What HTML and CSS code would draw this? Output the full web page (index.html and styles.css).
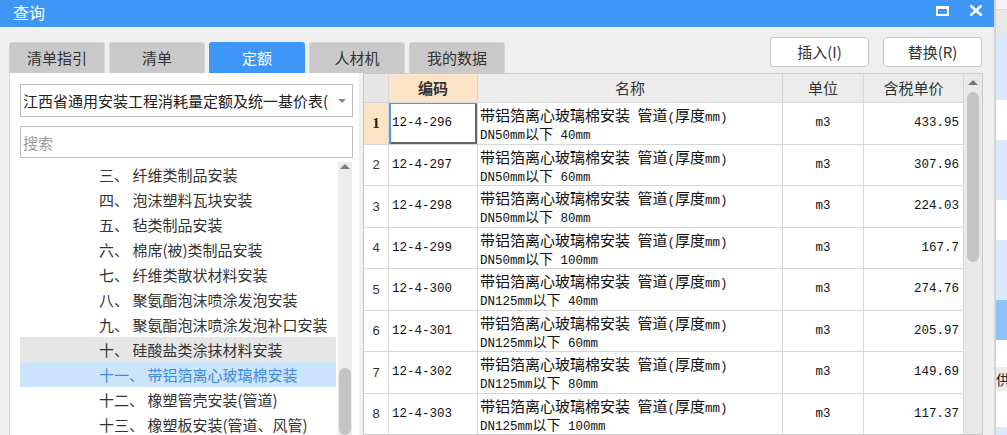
FILE: index.html
```html
<!DOCTYPE html>
<html lang="zh-CN">
<head>
<meta charset="utf-8">
<title>查询</title>
<link rel="stylesheet" href="styles.css">
</head>
<body>
<div class="dialog">
  <div class="titlebar">
    <span class="title">查询</span>
    <div class="winbtns">
      <svg class="ico" width="13" height="10" viewBox="0 0 13 10"><rect x="1" y="1.5" width="11" height="7.5" fill="none" stroke="#fff" stroke-width="2"/><rect x="0" y="0" width="13" height="3" fill="#fff"/></svg>
      <svg class="ico" width="12" height="11" viewBox="0 0 12 11"><path d="M1 1L11 10M11 1L1 10" stroke="#fff" stroke-width="2.6" stroke-linecap="square"/></svg>
    </div>
  </div>
  <div class="toolbar">
    <div class="tabs">
      <div class="tab">清单指引</div>
      <div class="tab">清单</div>
      <div class="tab active">定额</div>
      <div class="tab">人材机</div>
      <div class="tab">我的数据</div>
    </div>
    <div class="actions">
      <div class="btn">插入(I)</div>
      <div class="btn">替换(R)</div>
    </div>
  </div>
  <div class="main">
    <div class="left">
      <div class="select"><span class="select-text">江西省通用安装工程消耗量定额及统一基价表(</span><span class="caret"></span></div>
      <div class="search">搜索</div>
      <div class="tree">
        <div class="list">
          <div class="item"><span class="num">三、</span> 纤维类制品安装</div>
          <div class="item"><span class="num">四、</span> 泡沫塑料瓦块安装</div>
          <div class="item"><span class="num">五、</span> 毡类制品安装</div>
          <div class="item"><span class="num">六、</span> 棉席(被)类制品安装</div>
          <div class="item"><span class="num">七、</span> 纤维类散状材料安装</div>
          <div class="item"><span class="num">八、</span> 聚氨酯泡沫喷涂发泡安装</div>
          <div class="item"><span class="num">九、</span> 聚氨酯泡沫喷涂发泡补口安装</div>
          <div class="item hover"><span class="num">十、</span> 硅酸盐类涂抹材料安装</div>
          <div class="item selected"><span class="num">十一、</span> 带铝箔离心玻璃棉安装</div>
          <div class="item"><span class="num">十二、</span> 橡塑管壳安装(管道)</div>
          <div class="item"><span class="num">十三、</span> 橡塑板安装(管道、风管)</div>
        </div>
        <div class="vscroll tree-scroll">
          <span class="up"></span>
          <span class="thumb tree-thumb"></span>
        </div>
      </div>
    </div>
    <div class="table">
      <div class="grid">
        <div class="row head">
          <div class="c rn"></div>
          <div class="c code-h">编码</div>
          <div class="c">名称</div>
          <div class="c">单位</div>
          <div class="c">含税单价</div>
        </div>
        <div class="row">
          <div class="c rn first">1</div>
          <div class="c code focus">12-4-296</div>
          <div class="c name"><div><span class="cj">带铝箔离心玻璃棉安装</span> <span class="cj">管道</span>(<span class="cj">厚度</span>mm)</div><div>DN50mm<span class="cj">以下</span> 40mm</div></div>
          <div class="c unit">m3</div>
          <div class="c price">433.95</div>
        </div>
        <div class="row">
          <div class="c rn">2</div>
          <div class="c code">12-4-297</div>
          <div class="c name"><div><span class="cj">带铝箔离心玻璃棉安装</span> <span class="cj">管道</span>(<span class="cj">厚度</span>mm)</div><div>DN50mm<span class="cj">以下</span> 60mm</div></div>
          <div class="c unit">m3</div>
          <div class="c price">307.96</div>
        </div>
        <div class="row">
          <div class="c rn">3</div>
          <div class="c code">12-4-298</div>
          <div class="c name"><div><span class="cj">带铝箔离心玻璃棉安装</span> <span class="cj">管道</span>(<span class="cj">厚度</span>mm)</div><div>DN50mm<span class="cj">以下</span> 80mm</div></div>
          <div class="c unit">m3</div>
          <div class="c price">224.03</div>
        </div>
        <div class="row">
          <div class="c rn">4</div>
          <div class="c code">12-4-299</div>
          <div class="c name"><div><span class="cj">带铝箔离心玻璃棉安装</span> <span class="cj">管道</span>(<span class="cj">厚度</span>mm)</div><div>DN50mm<span class="cj">以下</span> 100mm</div></div>
          <div class="c unit">m3</div>
          <div class="c price">167.7</div>
        </div>
        <div class="row">
          <div class="c rn">5</div>
          <div class="c code">12-4-300</div>
          <div class="c name"><div><span class="cj">带铝箔离心玻璃棉安装</span> <span class="cj">管道</span>(<span class="cj">厚度</span>mm)</div><div>DN125mm<span class="cj">以下</span> 40mm</div></div>
          <div class="c unit">m3</div>
          <div class="c price">274.76</div>
        </div>
        <div class="row">
          <div class="c rn">6</div>
          <div class="c code">12-4-301</div>
          <div class="c name"><div><span class="cj">带铝箔离心玻璃棉安装</span> <span class="cj">管道</span>(<span class="cj">厚度</span>mm)</div><div>DN125mm<span class="cj">以下</span> 60mm</div></div>
          <div class="c unit">m3</div>
          <div class="c price">205.97</div>
        </div>
        <div class="row">
          <div class="c rn">7</div>
          <div class="c code">12-4-302</div>
          <div class="c name"><div><span class="cj">带铝箔离心玻璃棉安装</span> <span class="cj">管道</span>(<span class="cj">厚度</span>mm)</div><div>DN125mm<span class="cj">以下</span> 80mm</div></div>
          <div class="c unit">m3</div>
          <div class="c price">149.69</div>
        </div>
        <div class="row">
          <div class="c rn">8</div>
          <div class="c code">12-4-303</div>
          <div class="c name"><div><span class="cj">带铝箔离心玻璃棉安装</span> <span class="cj">管道</span>(<span class="cj">厚度</span>mm)</div><div>DN125mm<span class="cj">以下</span> 100mm</div></div>
          <div class="c unit">m3</div>
          <div class="c price">117.37</div>
        </div>
      </div>
      <div class="vscroll table-scroll">
        <span class="up"></span>
        <span class="thumb table-thumb"></span>
      </div>
    </div>
  </div>
</div>
<div class="bgwin">
  <div class="seg s1"></div>
  <div class="seg s2"></div>
  <div class="seg s3"></div>
  <div class="seg s4"></div>
  <div class="seg s5"></div>
  <div class="seg s6"></div>
  <div class="seg s7"></div>
  <div class="seg s8"></div>
  <div class="seg s9"></div>
  <div class="seg s10">供</div>
  <div class="seg s11"></div>
  <div class="seg s12"></div>
</div>
</body>
</html>
```

FILE: styles.css
```css
* { box-sizing: border-box; margin: 0; padding: 0; }
html, body { width: 1007px; height: 435px; overflow: hidden; }
body {
  display: flex;
  font-family: "Noto Sans CJK SC", "Noto Sans", sans-serif;
  color: #333;
  background: #f0f0f0;
}

.dialog {
  width: 995px;
  flex: none;
  display: flex;
  flex-direction: column;
  background: #f0f0f0;
  border-right: 1px solid #d8d8d8;
}

.titlebar {
  height: 27px;
  flex: none;
  background: #3e96f7;
  display: flex;
  align-items: center;
  padding: 0 12px 0 13px;
  color: #fff;
  font-size: 16px;
}
.title { line-height: 20px; margin-top: -3px; }
.winbtns { margin-left: auto; display: flex; align-items: center; gap: 21px; margin-top: -6px; }
.ico { display: block; }

.toolbar {
  height: 46px;
  flex: none;
  display: flex;
  padding: 0 12px 0 9px;
}
.tabs { display: flex; gap: 4px; align-self: flex-end; }
.tab {
  width: 96px;
  height: 31px;
  background: #c9c9c9;
  border: 1px solid #d6d6d6;
  border-bottom: none;
  border-radius: 3px 3px 0 0;
  font-size: 15px;
  line-height: 20px;
  display: flex;
  align-items: center;
  justify-content: center;
  color: #333;
}
.tab.active { background: #3e96f7; border-color: #3e96f7; color: #fff; }

.actions { margin-left: auto; display: flex; gap: 14px; margin-top: 10px; }
.btn {
  width: 99px;
  height: 30px;
  background: #fff;
  border: 1px solid #c8c8c8;
  border-radius: 3px;
  font-size: 15px;
  line-height: 20px;
  display: flex;
  align-items: center;
  justify-content: center;
  color: #333;
}

.main {
  flex: 1;
  min-height: 0;
  display: flex;
  gap: 4px;
  padding: 0 12px 0 9px;
}

.left {
  width: 350px;
  flex: none;
  background: #fff;
  border-left: 1px solid #d6d6d6;
  padding: 11px 6px 0 10px;
  display: flex;
  flex-direction: column;
  overflow: hidden;
}
.select {
  height: 33px;
  flex: none;
  border: 1px solid #bcbcbc;
  display: flex;
  align-items: center;
  padding: 0 6px 0 2px;
  font-size: 15px;
  color: #222;
}
.select-text { flex: 1; overflow: hidden; white-space: nowrap; line-height: 20px; }
.caret {
  width: 0; height: 0;
  border-left: 4px solid transparent;
  border-right: 4px solid transparent;
  border-top: 4px solid #888;
  margin-left: 8px;
}
.search {
  height: 32px;
  flex: none;
  margin-top: 9px;
  border: 1px solid #bcbcbc;
  display: flex;
  align-items: center;
  padding-left: 2px;
  font-size: 15px;
  color: #9a9a9a;
}

.tree { margin-top: 4px; flex: 1; min-height: 0; display: flex; gap: 2px; overflow: hidden; }
.list { width: 316px; flex: none; }
.item {
  height: 25px;
  line-height: 25px;
  padding-left: 79px;
  font-size: 15px;
  white-space: nowrap;
  color: #333;
}
.item.hover { background: #e6e6e6; }
.item.selected { background: #cce4fb; color: #3d8ae2; }

.vscroll {
  display: flex;
  flex-direction: column;
  align-items: center;
  background: #ececec;
}
.up {
  width: 0; height: 0;
  border-left: 5px solid transparent;
  border-right: 5px solid transparent;
  border-bottom: 5px solid #7a7a7a;
}
.thumb { background: #c4c4c4; border-radius: 6px; width: 12px; }
.tree-scroll { width: 14px; flex: none; }
.tree-scroll .up { margin-top: 2px; }
.tree-thumb { margin-top: 199px; height: 120px; }

.table {
  width: 620px;
  flex: none;
  border: 1px solid #c9c9c9;
  background: #fff;
  display: flex;
  overflow: hidden;
}
.grid { width: 600px; flex: none; }
.row {
  display: grid;
  grid-template-columns: 25px 89px 305px 81px 100px;
  height: 41.5px;
}
.row.head { height: 29px; }
.c {
  border-right: 1px solid #d6d6d6;
  border-bottom: 1px solid #d6d6d6;
  display: flex;
  align-items: center;
  overflow: hidden;
  white-space: nowrap;
}
.head .c {
  background: #ececec;
  justify-content: center;
  font-size: 15px;
  line-height: 20px;
  color: #333;
}
.head .c.rn { background: #e6e6e6; }
.head .c.code-h { background: #fde4c6; font-weight: bold; }

.rn {
  justify-content: center;
  font-family: "Liberation Sans", sans-serif;
  font-size: 13px;
  color: #333;
}
.rn.first {
  background: #fde4c6;
  font-family: "Liberation Serif", serif;
  font-weight: bold;
  font-size: 15px;
  color: #222;
}
.code, .name, .unit, .price {
  font-family: "Liberation Mono", "Noto Sans CJK SC", monospace;
  font-size: 12.5px;
  color: #111;
}
.code { padding-left: 3px; }
.code.focus { box-shadow: inset 2px 1px 0 #4f9cea, inset -2px -2px 0 #666; }
.name {
  flex-direction: column;
  align-items: flex-start;
  justify-content: flex-start;
  padding: 3px 0 0 2px;
}
.name div { line-height: 18px; height: 18px; }
.cj { font-family: "Noto Sans CJK SC", sans-serif; font-size: 15px; }
.name div + div .cj { font-size: 14px; }
.unit { justify-content: center; }
.price { justify-content: flex-end; padding-right: 4px; }

.table-scroll { width: 18px; flex: none; background: #e9e9e9; }
.table-scroll .up { margin-top: 6px; }
.table-thumb { margin-top: 7px; height: 170px; }

.bgwin {
  flex: 1;
  display: flex;
  flex-direction: column;
  border-left: 1px solid #cfcfcf;
  overflow: hidden;
}
.seg { flex: none; }
.s1 { height: 10px; background: #f4f4f4; border-bottom: 1px solid #d8d8d8; }
.s2 { height: 23px; background: #e8e8e8; }
.s3 { height: 67px; background: #dce8fb; }
.s4 { height: 40px; background: #fff; }
.s5 { height: 60px; background: #dce8fb; }
.s6 { height: 40px; background: #fff; }
.s7 { height: 60px; background: #dce8fb; }
.s8 { height: 40px; background: #8ec3f5; }
.s9 { height: 27px; background: #fff; }
.s10 { height: 24px; background: #ececec; font-size: 14px; line-height: 24px; color: #222; white-space: nowrap; }
.s11 { height: 36px; background: #fff; }
.s12 { height: 20px; background: #dce8fb; }
```
